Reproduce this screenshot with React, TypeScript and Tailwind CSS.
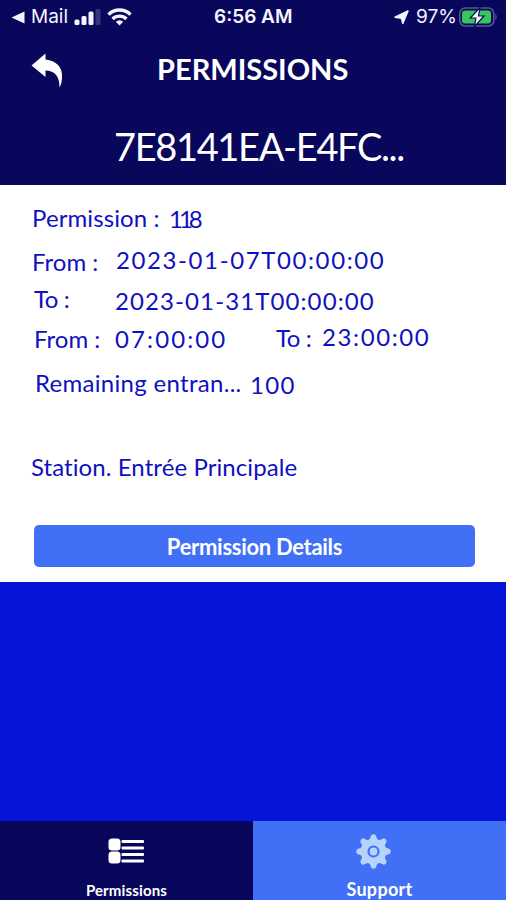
import React from 'react';

interface TextProps {
  className?: string;
  children: React.ReactNode;
}

function Label({ className = '', children }: TextProps) {
  return <span className={`block shrink-0 whitespace-nowrap text-[24px] leading-[30px] ${className}`}>{children}</span>;
}

function StatusBar() {
  return (
    <div className="flex h-[34px] items-center pl-[11px] font-['Inter',sans-serif] text-[#f4f4ff]">
      <svg className="h-[13px] w-[14px] shrink-0" viewBox="0 0 14 13" fill="currentColor">
        <path d="M0.5 6.5 13.5 0.5v12z" />
      </svg>
      <span className="ml-[6px] w-[43px] whitespace-nowrap text-[19px] leading-[34px]">Mail</span>
      <svg className="h-[17px] w-[27px] shrink-0" viewBox="0 0 27 17" fill="currentColor">
        <rect x="0.5" y="10.5" width="5" height="5.5" rx="1.5" />
        <rect x="7.5" y="7" width="5" height="9" rx="1.5" />
        <rect x="14.5" y="2.5" width="5" height="13.5" rx="1.5" />
        <rect x="21.5" y="0" width="5" height="16" rx="1.5" opacity="0.2" />
      </svg>
      <svg className="ml-[6px] h-[18px] w-[25px] shrink-0" viewBox="0 0 25 18" fill="none" stroke="currentColor" strokeWidth="3.4">
        <path d="M1.5 6.6a15.5 15.5 0 0 1 22 0" />
        <path d="M5.6 11a9.8 9.8 0 0 1 13.8 0" />
        <path d="M12.5 17.5 8.8 13.8a5.3 5.3 0 0 1 7.4 0z" fill="currentColor" stroke="none" />
      </svg>
      <span className="ml-[82px] w-[80px] whitespace-nowrap text-[19px] font-semibold leading-[34px]">6:56 AM</span>
      <svg className="ml-[100px] h-[15px] w-[15px] shrink-0" viewBox="0 0 15 15" fill="currentColor" stroke="currentColor" strokeLinejoin="round">
        <path d="M14 1 8.8 13.5 7.5 8.2 1 7.2z" strokeWidth="1.5" />
      </svg>
      <span className="ml-[7px] w-[43px] whitespace-nowrap text-[19px] leading-[34px]">97%</span>
      <svg className="h-[20px] w-[38px] shrink-0" viewBox="0 0 38 20">
        <rect x="0.8" y="1" width="34" height="18" rx="5.5" fill="none" stroke="#57578f" strokeWidth="1.6" />
        <path d="M36.4 7v6c1.6-.6 1.6-5.4 0-6z" fill="#57578f" />
        <rect x="3" y="3.5" width="29" height="13" rx="3" fill="#35c75a" />
        <path d="M21 0.5 11.3 11h5.6l-1.4 8.5L25 9h-5.5z" fill="#fff" stroke="#08075c" strokeWidth="1.2" />
      </svg>
    </div>
  );
}

function Header() {
  return (
    <header className="h-[185px] bg-[#08075c] text-white">
      <StatusBar />
      <div className="flex h-[71px] items-center">
        <svg className="ml-[31px] h-[36px] w-[32px] shrink-0" viewBox="0 0 32 36" fill="currentColor">
          <path d="M0.5 13.5 14.5 1.5v6C25 8.500 32 15 31 26c-.2 4-1 7-2.500 9.500C28.800 25 24 18.500 14.500 18.500v6.500z" />
        </svg>
        <h1 className="mb-[2px] ml-[94px] whitespace-nowrap text-[29px] font-bold leading-[36px]">PERMISSIONS</h1>
      </div>
      <h2 className="ml-[114px] mt-[16px] whitespace-nowrap text-[38px] leading-[50px] tracking-[-1.35px]">7E8141EA-E4FC...</h2>
    </header>
  );
}

function PermissionCard() {
  return (
    <main className="h-[397px] bg-white pt-[18px] text-[#1010c0] [font-variant-ligatures:none]">
      <div className="flex h-[42px] pl-[32px]">
        <Label className="w-[137px] tracking-[0.1px]">Permission :</Label>
        <Label className="pt-px tracking-[-4px]">118</Label>
      </div>
      <div className="flex h-[39px] pl-[32px]">
        <Label className="w-[84px] pt-[2px]">From :</Label>
        <Label className="tracking-[1.6px]">2023-01-07T00:00:00</Label>
      </div>
      <div className="flex h-[38px] pl-[34px]">
        <Label className="w-[81px] tracking-[-0.4px]">To :</Label>
        <Label className="pt-[2px] tracking-[1.1px]">2023-01-31T00:00:00</Label>
      </div>
      <div className="flex h-[46px] pl-[34px]">
        <Label className="w-[81px] pt-[2px]">From :</Label>
        <Label className="w-[161px] pt-[2px] tracking-[2.1px]">07:00:00</Label>
        <Label className="w-[46px] pt-px tracking-[-0.4px]">To :</Label>
        <Label className="tracking-[1.6px]">23:00:00</Label>
      </div>
      <div className="flex h-[84px] pl-[35px]">
        <Label className="w-[215px] tracking-[0.3px]">Remaining entran...</Label>
        <Label className="pt-[2px] tracking-[1.3px]">100</Label>
      </div>
      <Label className="h-[73px] pl-[31px] tracking-[0.08px]">Station. Entrée Principale</Label>
      <button className="ml-[34px] flex h-[42px] w-[441px] items-center justify-center rounded-[5px] bg-[#4170f6] text-[22px] font-bold tracking-[-0.3px] text-white">
        Permission Details
      </button>
    </main>
  );
}

function TabBar() {
  return (
    <nav className="flex h-[79px] overflow-hidden text-white">
      <div className="flex w-[253px] flex-col items-center bg-[#08075c]">
        <svg className="mt-[17px] h-[26px] w-[37px]" viewBox="0 0 37 26" fill="currentColor">
          <rect x="0.5" y="0.5" width="12" height="12" rx="3.5" />
          <rect x="0.5" y="13.5" width="12" height="12" rx="3.5" />
          <rect x="13.5" y="2" width="22.5" height="3" rx="1" />
          <rect x="13.5" y="8.5" width="22.5" height="3" rx="1" />
          <rect x="13.5" y="15" width="22.5" height="3" rx="1" />
          <rect x="13.5" y="21.5" width="22.5" height="3" rx="1" />
        </svg>
        <span className="mt-[16px] text-[15px] font-bold leading-[20px] tracking-[0.15px]">Permissions</span>
      </div>
      <div className="flex w-[253px] flex-col items-center bg-[#4170f6]">
        <svg className="mr-[12px] mt-[13px] h-[35px] w-[35px] shrink-0" viewBox="-17.5 -17.5 35 35" fill="#b5d4fc">
          <circle r="12.8" />
          {[0, 45, 90, 135, 180, 225, 270, 315].map((angle) => (
            <path key={angle} transform={`rotate(${angle})`} d="M-6.5-10.5C-3.8-11.5-3.2-13-2.7-15.5Q-2-17.3 0-17.3T2.7-15.5C3.2-13 3.8-11.5 6.5-10.5z" />
          ))}
          <circle r="5" fill="none" stroke="#4170f6" strokeWidth="2.2" />
        </svg>
        <span className="mt-[8px] shrink-0 text-[18px] font-bold leading-[24px] tracking-[0.3px]">Support</span>
      </div>
    </nav>
  );
}

export default function App() {
  return (
    <div className="flex h-[900px] w-[506px] flex-col overflow-hidden bg-[#0415d8] font-['Lato',sans-serif]">
      <Header />
      <PermissionCard />
      <div className="flex-1" />
      <TabBar />
    </div>
  );
}
